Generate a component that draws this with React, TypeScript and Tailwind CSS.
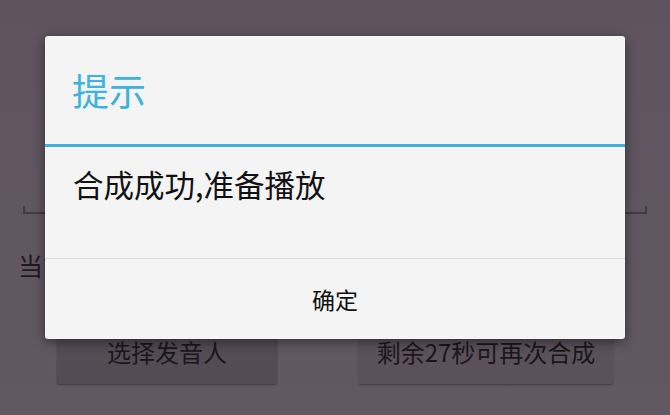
import React from "react";

const cjk = { fontFamily: '"Noto Sans CJK SC", "Noto Sans", sans-serif' };

const AlertDialog = () => (
  <div className="absolute left-[45px] top-[36px] w-[580px] h-[303px] bg-[#f4f4f4] rounded-[3px] shadow-[0_3px_12px_rgba(0,0,0,0.45)] flex flex-col">
    <div className="h-[108px] flex items-center px-[27px]">
      <h2 className="text-[37px] leading-none text-[#3db2de]">提示</h2>
    </div>
    <div className="h-[3px] bg-[#3db2de]" />
    <div className="h-[111px] px-[28px] pt-[19px]">
      <p className="text-[30.5px] leading-[36px] text-[#111]">合成成功,准备播放</p>
    </div>
    <div className="h-px bg-[#dcdcdc]" />
    <button className="flex-1 flex items-center justify-center text-[23px] text-[#111]">
      确定
    </button>
  </div>
);

export default function App() {
  return (
    <div
      className="relative w-[670px] h-[415px] overflow-hidden bg-gradient-to-b from-[#5e535e] to-[#625862]"
      style={cjk}
    >
      {/* page behind the dialog, dimmed */}
      <div className="flex flex-col pt-[150px]">
        <div className="mx-[23px] h-[64px] border-b-2 border-x-2 border-t-0 border-[#433a44] [clip-path:inset(56px_0_0_0)]" />
        <p className="mt-[36px] ml-[18px] text-[25px] leading-[30px] text-[#1e1a1f]">当前发音人：小燕</p>
        <div className="mt-[40px] flex justify-between pl-[57px] pr-[57px]">
          <div className="w-[220px] h-[64px] bg-[#544b55] rounded-[2px] shadow-[0_1px_2px_rgba(0,0,0,0.35)] flex items-center justify-center text-[24px] text-[#1a161b]">
            选择发音人
          </div>
          <div className="w-[254px] h-[64px] bg-[#5b515b] rounded-[2px] shadow-[0_1px_2px_rgba(0,0,0,0.35)] flex items-center justify-center text-[24px] text-[#1a161b]">
            剩余27秒可再次合成
          </div>
        </div>
      </div>
      <AlertDialog />
    </div>
  );
}
